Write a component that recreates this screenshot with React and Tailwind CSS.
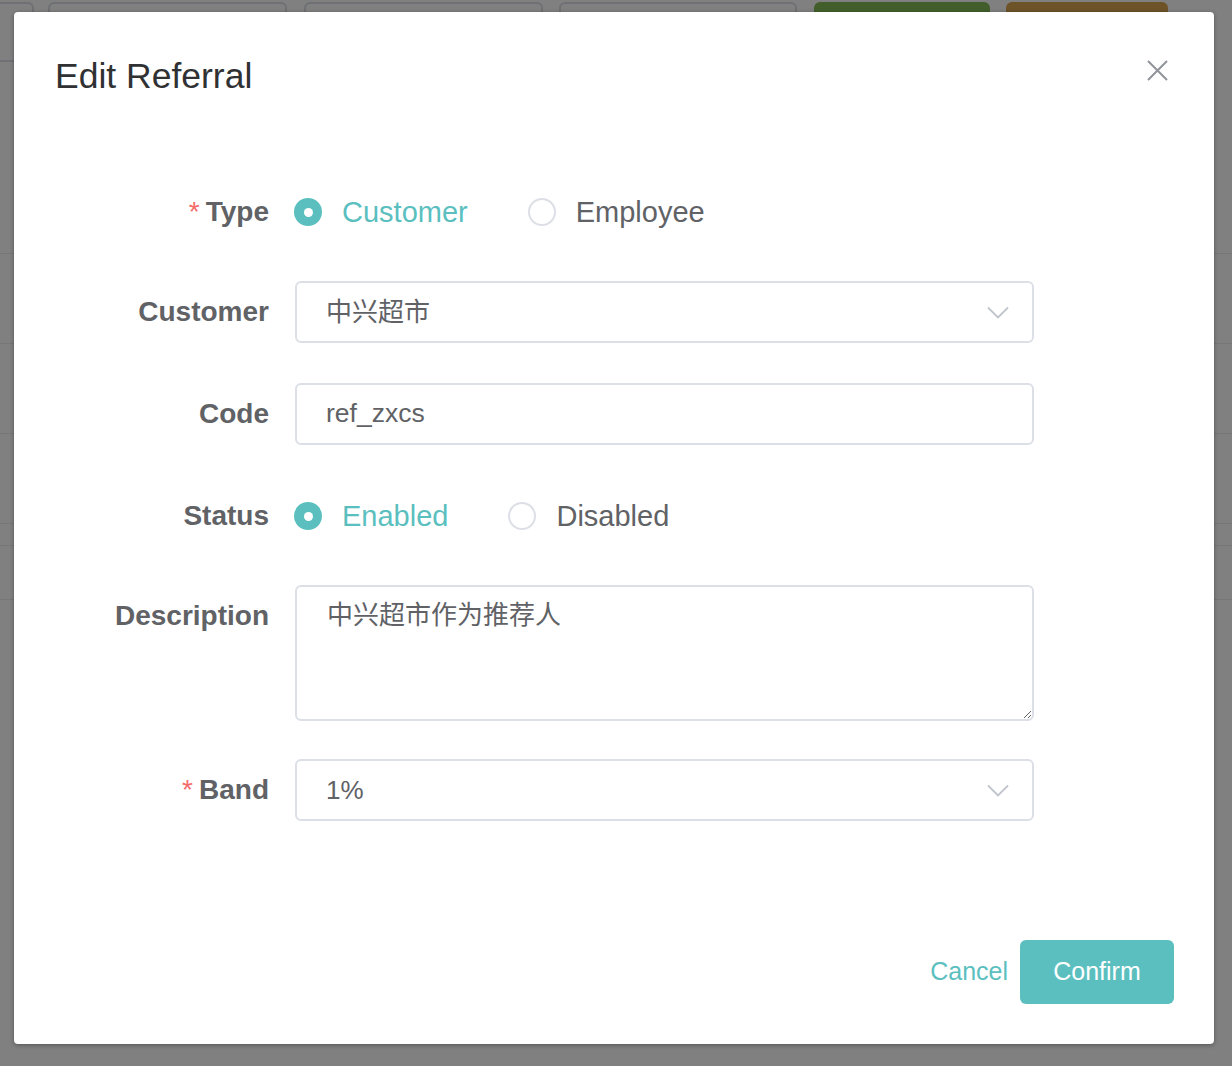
import React from "react";

function Chevron() {
  return (
    <svg width="22" height="13" viewBox="0 0 22 13" fill="none">
      <path d="M1 1.5 L11 11.5 L21 1.5" stroke="#c0c4cc" strokeWidth="1.8" />
    </svg>
  );
}

function Radio({ checked, label, className = "" }) {
  return (
    <div className={"flex items-center " + className}>
      {checked ? (
        <span className="flex h-[28px] w-[28px] items-center justify-center rounded-full bg-[#5bbfbf]">
          <span className="h-[9px] w-[9px] rounded-full bg-white" />
        </span>
      ) : (
        <span className="h-[28px] w-[28px] rounded-full border-2 border-[#dcdfe6] bg-white" />
      )}
      <span
        className={
          "ml-[20px] text-[29px] leading-[62px] " +
          (checked ? "text-[#5bbfbf]" : "text-[#606266]")
        }
      >
        {label}
      </span>
    </div>
  );
}

function Label({ children, required }) {
  return (
    <div className="w-[255px] shrink-0 text-right text-[28px] font-bold leading-[62px] text-[#606266]">
      {required && <span className="mr-[6px] font-normal text-[#f56c6c]">*</span>}
      {children}
    </div>
  );
}

function Row({ label, required, className = "", children }) {
  return (
    <div className={"flex items-start " + className}>
      <Label required={required}>{label}</Label>
      <div className="ml-[26px] w-[739px]">{children}</div>
    </div>
  );
}

function SelectBox({ value }) {
  return (
    <div className="flex h-[62px] items-center justify-between rounded-[6px] border-2 border-[#dcdfe6] bg-white pl-[29px] pr-[23px] text-[26px] text-[#606266]">
      <span>{value}</span>
      <Chevron />
    </div>
  );
}

export default function App() {
  return (
    <div className="relative h-[1066px] w-full overflow-hidden bg-[#808080] font-['Liberation_Sans','Noto_Sans_CJK_SC',sans-serif]">
      {/* page behind the overlay */}
      <div className="flex flex-col">
        <div className="relative h-[254px] border-b border-[#767676]">
          <div className="flex pt-[2px]">
            <div className="h-[60px] w-[34px] rounded-r-[6px] border-2 border-l-0 border-[#6f7074]" />
            <div className="ml-[14px] h-[60px] w-[239px] rounded-[6px] border-2 border-[#6f7074]" />
            <div className="ml-[17px] h-[60px] w-[239px] rounded-[6px] border-2 border-[#6f7074]" />
            <div className="ml-[16px] h-[60px] w-[238px] rounded-[6px] border-2 border-[#6f7074]" />
            <div className="ml-[17px] h-[60px] w-[176px] rounded-[6px] bg-[#425f2b]" />
            <div className="ml-[16px] h-[60px] w-[162px] rounded-[6px] bg-[#6e5228]" />
          </div>
        </div>
        <div className="h-[90px] border-b border-[#767676]" />
        <div className="h-[90px] border-b border-[#767676]" />
        <div className="h-[90px] border-b border-[#767676]" />
        <div className="h-[22px] border-b border-[#767676]" />
        <div className="h-[54px] border-b border-[#767676]" />
      </div>

      {/* modal */}
      <div className="absolute left-[14px] top-[12px] flex h-[1032px] w-[1200px] flex-col rounded-[4px] bg-white shadow-[0_1px_4px_rgba(0,0,0,0.35)]">
        <div className="flex items-start justify-between pl-[41px] pr-[46px] pt-[44px]">
          <h1 className="text-[35.5px] leading-[40px] text-[#303133]">Edit Referral</h1>
          <svg className="mt-[4px]" width="21" height="21" viewBox="0 0 21 21" fill="none">
            <path d="M1 1 L20 20 M20 1 L1 20" stroke="#909399" strokeWidth="2" />
          </svg>
        </div>

        <div className="mt-[85px] flex flex-col">
          <Row label="Type" required>
            <div className="-ml-[1px] flex items-center">
              <Radio checked label="Customer" />
              <Radio label="Employee" className="ml-[60px]" />
            </div>
          </Row>

          <Row label="Customer" className="mt-[38px]">
            <SelectBox value="中兴超市" />
          </Row>

          <Row label="Code" className="mt-[40px]">
            <div className="flex h-[62px] items-center rounded-[6px] border-2 border-[#dcdfe6] bg-white px-[29px] text-[26.5px] text-[#606266]">
              ref_zxcs
            </div>
          </Row>

          <Row label="Status" className="mt-[40px]">
            <div className="-ml-[1px] flex items-center">
              <Radio checked label="Enabled" />
              <Radio label="Disabled" className="ml-[60px]" />
            </div>
          </Row>

          <Row label="Description" className="mt-[38px]">
            <textarea
              readOnly
              defaultValue="中兴超市作为推荐人"
              className="block h-[136px] w-full rounded-[6px] border-2 border-[#dcdfe6] bg-white px-[30px] py-[8px] text-[26px] leading-[40px] text-[#606266] outline-none"
            />
          </Row>

          <Row label="Band" required className="mt-[38px]">
            <SelectBox value="1%" />
          </Row>
        </div>

        <div className="mt-auto flex items-center justify-end pb-[40px] pr-[40px]">
          <span className="text-[25px] text-[#5bbfbf]">Cancel</span>
          <button className="ml-[12px] h-[64px] w-[154px] rounded-[6px] bg-[#5bbfc0] text-[25px] text-white">
            Confirm
          </button>
        </div>
      </div>
    </div>
  );
}
